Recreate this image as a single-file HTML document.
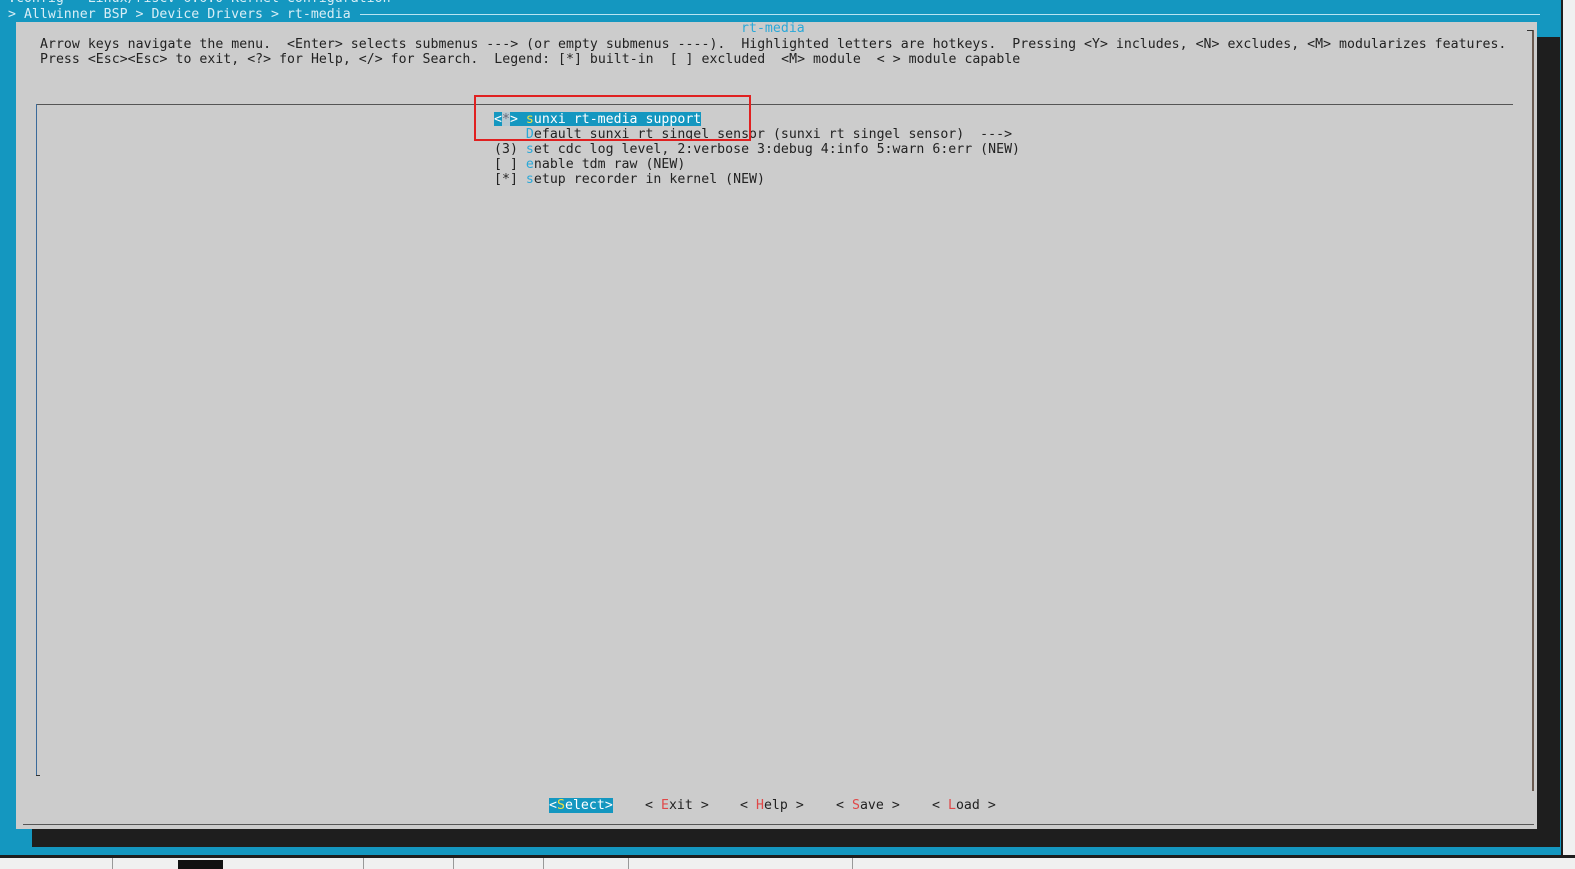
<!DOCTYPE html>
<html><head><meta charset="utf-8"><style>
*{margin:0;padding:0;box-sizing:border-box}
body{width:1575px;height:869px;overflow:hidden;background:#1497c0;position:relative;font-family:"DejaVu Sans Mono","Liberation Mono",monospace;font-size:13.2px;}
.a{position:absolute}
.l{position:absolute;white-space:pre;line-height:15px;height:15px;letter-spacing:0.03px}
.k{color:#2aa8d8}
.r{color:#e04848}
.y{color:#f0e040}
</style></head><body>
<div class="a" style="left:1561px;top:0;width:14px;height:869px;background:#f0f0f0;border-left:2px solid #1e1e1e"></div>
<div class="a" style="left:0;top:855px;width:1575px;height:14px;background:#f0f0f0;border-top:3px solid #1e1e1e"></div>
<div class="a" style="left:112px;top:858px;width:1px;height:11px;background:#999"></div>
<div class="a" style="left:178px;top:860px;width:45px;height:9px;background:#111"></div>
<div class="a" style="left:363px;top:858px;width:1px;height:11px;background:#999"></div>
<div class="a" style="left:453px;top:858px;width:1px;height:11px;background:#999"></div>
<div class="a" style="left:543px;top:858px;width:1px;height:11px;background:#999"></div>
<div class="a" style="left:628px;top:858px;width:1px;height:11px;background:#999"></div>
<div class="a" style="left:852px;top:858px;width:1px;height:11px;background:#999"></div>
<div class="a" style="left:32px;top:37px;width:1528px;height:810px;background:#1e1e1e"></div>
<div class="a" style="left:16px;top:22px;width:1521px;height:807px;background:#cccccc"></div>
<div class="l" style="left:8px;top:-9px;color:#d8eef6">.config - Linux/riscv 6.6.0 Kernel Configuration</div>
<div class="l" style="left:8px;top:7px;color:#d8eef6">&gt; Allwinner BSP &gt; Device Drivers &gt; rt-media</div>
<div class="a" style="left:360px;top:14px;width:1180px;height:1px;background:#b8e4f2"></div>
<div class="l k" style="left:741px;top:21px">rt-media</div>
<div class="l" style="left:40px;top:37px;color:#222">Arrow keys navigate the menu.  &lt;Enter&gt; selects submenus ---&gt; (or empty submenus ----).  Highlighted letters are hotkeys.  Pressing &lt;Y&gt; includes, &lt;N&gt; excludes, &lt;M&gt; modularizes features.</div>
<div class="l" style="left:40px;top:52px;color:#222">Press &lt;Esc&gt;&lt;Esc&gt; to exit, &lt;?&gt; for Help, &lt;/&gt; for Search.  Legend: [*] built-in  [ ] excluded  &lt;M&gt; module  &lt; &gt; module capable</div>
<div class="a" style="left:1532px;top:30px;width:2px;height:761px;background:#6a5a50"></div>
<div class="a" style="left:1527px;top:30px;width:6px;height:1px;background:#333"></div>
<div class="a" style="left:36px;top:104px;width:1477px;height:1px;background:#555"></div>
<div class="a" style="left:36px;top:104px;width:1px;height:672px;background:#3a6a9a"></div>
<div class="a" style="left:36px;top:775px;width:4px;height:1px;background:#333"></div>
<div class="a" style="left:23px;top:824px;width:1511px;height:1px;background:#555"></div>
<div class="a" style="left:494px;top:112px;width:207px;height:14px;background:#1497c0"></div>
<div class="a" style="left:502px;top:112px;width:8px;height:14px;background:#b8c8d0"></div>
<div class="l" style="left:494px;top:112px;color:#fff">&lt;<span style="color:#667">*</span>&gt; <span class="y">s</span>unxi rt-media support</div>
<div class="l" style="left:494px;top:127px;color:#222">    <span class="k">D</span>efault sunxi rt singel sensor (sunxi rt singel sensor)  ---&gt;</div>
<div class="l" style="left:494px;top:142px;color:#222">(3) <span class="k">s</span>et cdc log level, 2:verbose 3:debug 4:info 5:warn 6:err (NEW)</div>
<div class="l" style="left:494px;top:157px;color:#222">[ ] <span class="k">e</span>nable tdm raw (NEW)</div>
<div class="l" style="left:494px;top:172px;color:#222">[*] <span class="k">s</span>etup recorder in kernel (NEW)</div>
<div class="a" style="left:474px;top:95px;width:277px;height:46px;border:2px solid #e02020"></div>
<div class="a" style="left:549px;top:798px;width:64px;height:15px;background:#1497c0"></div>
<div class="l" style="left:549px;top:798px;color:#fff">&lt;<span class="y">S</span>elect&gt;</div>
<div class="l" style="left:645px;top:798px;color:#222">&lt; <span class="r">E</span>xit &gt;</div>
<div class="l" style="left:740px;top:798px;color:#222">&lt; <span class="r">H</span>elp &gt;</div>
<div class="l" style="left:836px;top:798px;color:#222">&lt; <span class="r">S</span>ave &gt;</div>
<div class="l" style="left:932px;top:798px;color:#222">&lt; <span class="r">L</span>oad &gt;</div>
</body></html>
